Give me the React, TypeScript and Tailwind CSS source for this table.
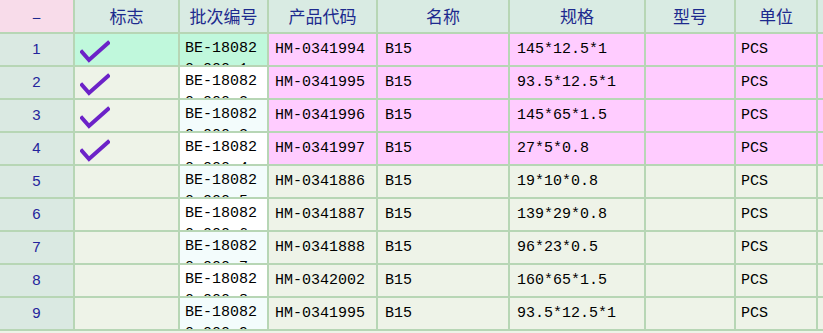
import React from 'react'

interface Row {
  no: number;
  flag: boolean;
  batch: string;
  code: string;
  name: string;
  spec: string;
  model: string;
  unit: string;
}

const rows: Row[] = [
  { no: 1, flag: true, batch: 'BE-180820-000-1', code: 'HM-0341994', name: 'B15', spec: '145*12.5*1', model: '', unit: 'PCS' },
  { no: 2, flag: true, batch: 'BE-180820-000-2', code: 'HM-0341995', name: 'B15', spec: '93.5*12.5*1', model: '', unit: 'PCS' },
  { no: 3, flag: true, batch: 'BE-180820-000-3', code: 'HM-0341996', name: 'B15', spec: '145*65*1.5', model: '', unit: 'PCS' },
  { no: 4, flag: true, batch: 'BE-180820-000-4', code: 'HM-0341997', name: 'B15', spec: '27*5*0.8', model: '', unit: 'PCS' },
  { no: 5, flag: false, batch: 'BE-180820-000-5', code: 'HM-0341886', name: 'B15', spec: '19*10*0.8', model: '', unit: 'PCS' },
  { no: 6, flag: false, batch: 'BE-180820-000-6', code: 'HM-0341887', name: 'B15', spec: '139*29*0.8', model: '', unit: 'PCS' },
  { no: 7, flag: false, batch: 'BE-180820-000-7', code: 'HM-0341888', name: 'B15', spec: '96*23*0.5', model: '', unit: 'PCS' },
  { no: 8, flag: false, batch: 'BE-180820-000-8', code: 'HM-0342002', name: 'B15', spec: '160*65*1.5', model: '', unit: 'PCS' },
  { no: 9, flag: false, batch: 'BE-180820-000-9', code: 'HM-0341995', name: 'B15', spec: '93.5*12.5*1', model: '', unit: 'PCS' },
]

const cols = ['w-[75px]', 'w-[105px]', 'w-[89px]', 'w-[109px]', 'w-[132px]', 'w-[136px]', 'w-[90px]', 'w-[82px]', 'w-[40px]']
const heads = ['–', '标志', '批次编号', '产品代码', '名称', '规格', '型号', '单位', '']

function Check() {
  return (
    <svg width="30" height="24" viewBox="0 0 30 24" className="ml-[5px] mt-[6px]">
      <path d="M2 12 L9 20 L28 3" fill="none" stroke="#6c22c8" strokeWidth="4" strokeLinecap="square" strokeLinejoin="miter" />
    </svg>
  )
}

export default function App() {
  const cell = 'shrink-0 h-full border-r-2 border-[#b7d6b5] overflow-hidden'
  const mono = "font-['Liberation_Mono',monospace] text-[15px] text-black"
  return (
    <div className="w-[823px] h-[333px] overflow-hidden bg-[#eef3e8]">
      <div className="w-[900px]">
        <div className="flex h-[34px] border-b-2 border-[#b7d6b5] bg-[#d9ebe3] font-['Noto_Sans_CJK_SC',sans-serif] text-[17px] text-[#1d2a8e]">
          {heads.map((h, i) => (
            <div key={i} className={`${cell} ${cols[i]} flex items-center justify-center ${i === 0 ? 'bg-[#f8dcea]' : ''}`}>
              {h}
            </div>
          ))}
        </div>
        {rows.map(r => {
          const pink = r.flag ? 'bg-[#ffccff]' : ''
          const batchBg = r.no === 1 ? 'bg-[#c0f8dc]' : r.no % 2 === 0 ? 'bg-white' : 'bg-[#f3fcfc]'
          return (
            <div key={r.no} className="flex h-[33px] border-b-2 border-[#b7d6b5]">
              <div className={`${cell} ${cols[0]} bg-[#dae9e2] flex items-center justify-center font-['Liberation_Sans',sans-serif] text-[15px] text-[#24249c]`}>
                {r.no}
              </div>
              <div className={`${cell} ${cols[1]} ${r.no === 1 ? 'bg-[#c0f8dc]' : ''}`}>
                {r.flag && <Check />}
              </div>
              <div className={`${cell} ${cols[2]} ${batchBg} pl-[5px] pt-[4px]`}>
                <div className={`${mono} w-[76px] break-all leading-[21px]`}>{r.batch}</div>
              </div>
              <div className={`${cell} ${cols[3]} ${pink} ${mono} flex items-center pl-[6px] pt-[1px]`}>{r.code}</div>
              <div className={`${cell} ${cols[4]} ${pink} ${mono} flex items-center pl-[7px] pt-[1px]`}>{r.name}</div>
              <div className={`${cell} ${cols[5]} ${pink} ${mono} flex items-center pl-[7px] pt-[1px]`}>{r.spec}</div>
              <div className={`${cell} ${cols[6]} ${pink} ${mono} flex items-center pl-[6px] pt-[1px]`}>{r.model}</div>
              <div className={`${cell} ${cols[7]} ${pink} ${mono} flex items-center pl-[5px] pt-[1px]`}>{r.unit}</div>
              <div className={`${cell} ${cols[8]} ${pink}`} />
            </div>
          )
        })}
      </div>
    </div>
  )
}
